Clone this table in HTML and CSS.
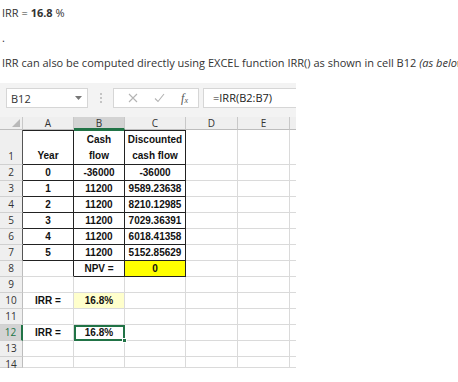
FILE: index.html
```html
<!DOCTYPE html>
<html>
<head>
<meta charset="utf-8">
<link rel="stylesheet" href="styles.css">
</head>
<body>
<p class="line">IRR = <b>16.8</b> %</p>
<p class="line">.</p>
<p class="line">IRR can also be computed directly using EXCEL function IRR() as shown in cell B12 <i>(as below)</i></p>

<div class="excel">
  <div class="fbar">
    <div class="namebox"><span>B12</span>
      <svg class="dd" width="7" height="4" viewBox="0 0 7 4"><path d="M0 0h7L3.5 4z" fill="#777"/></svg>
    </div>
    <div class="dots"><i></i><i></i><i></i></div>
    <div class="btns">
      <svg width="10" height="10" viewBox="0 0 10 10"><path d="M1 1l8 8M9 1l-8 8" stroke="#b4b4b4" stroke-width="1.1"/></svg>
      <svg width="11" height="10" viewBox="0 0 11 10"><path d="M1 5.5l3 3L10 1" stroke="#b4b4b4" stroke-width="1.1" fill="none"/></svg>
      <span class="fx">f<sub>x</sub></span>
    </div>
    <div class="formula">=IRR(B2:B7)</div>
  </div>

  <div class="grid">
    <div class="ch corner"><svg width="8" height="8" viewBox="0 0 8 8"><path d="M8 0V8H0z" fill="#b9b9b9"/></svg></div>
    <div class="ch">A</div><div class="ch sel">B</div><div class="ch">C</div><div class="ch">D</div><div class="ch">E</div><div class="ch last"></div>

    <div class="rh r1 kb">1</div>
    <div class="c r1 bt bb br bot">Year</div>
    <div class="c r1 bb br bot green-top">Cash<br>flow</div>
    <div class="c r1 bt bb br bot">Discounted<br>cash flow</div>
    <div class="c r1"></div><div class="c r1"></div><div class="c r1 last"></div>

    <div class="rh kb">2</div><div class="c bb br">0</div><div class="c bb br">-36000</div><div class="c bb br">-36000</div><div class="c"></div><div class="c"></div><div class="c last"></div>
    <div class="rh kb">3</div><div class="c bb br">1</div><div class="c bb br">11200</div><div class="c bb br">9589.23638</div><div class="c"></div><div class="c"></div><div class="c last"></div>
    <div class="rh kb">4</div><div class="c bb br">2</div><div class="c bb br">11200</div><div class="c bb br">8210.12985</div><div class="c"></div><div class="c"></div><div class="c last"></div>
    <div class="rh kb">5</div><div class="c bb br">3</div><div class="c bb br">11200</div><div class="c bb br">7029.36391</div><div class="c"></div><div class="c"></div><div class="c last"></div>
    <div class="rh kb">6</div><div class="c bb br">4</div><div class="c bb br">11200</div><div class="c bb br">6018.41358</div><div class="c"></div><div class="c"></div><div class="c last"></div>
    <div class="rh kb">7</div><div class="c bb br">5</div><div class="c bb br">11200</div><div class="c bb br">5152.85629</div><div class="c"></div><div class="c"></div><div class="c last"></div>
    <div class="rh">8</div><div class="c br"></div><div class="c bb br">NPV =</div><div class="c bb br yellow">0</div><div class="c"></div><div class="c"></div><div class="c last"></div>
    <div class="rh">9</div><div class="c"></div><div class="c"></div><div class="c"></div><div class="c"></div><div class="c"></div><div class="c last"></div>
    <div class="rh">10</div><div class="c">IRR =</div><div class="c lightyellow">16.8%</div><div class="c"></div><div class="c"></div><div class="c"></div><div class="c last"></div>
    <div class="rh">11</div><div class="c"></div><div class="c"></div><div class="c"></div><div class="c"></div><div class="c"></div><div class="c last"></div>
    <div class="rh selrow">12</div><div class="c">IRR =</div><div class="c active">16.8%<span class="handle"></span></div><div class="c"></div><div class="c"></div><div class="c"></div><div class="c last"></div>
    <div class="rh">13</div><div class="c"></div><div class="c"></div><div class="c"></div><div class="c"></div><div class="c"></div><div class="c last"></div>
    <div class="rh">14</div><div class="c"></div><div class="c"></div><div class="c"></div><div class="c"></div><div class="c"></div><div class="c last"></div>
  </div>
</div>
</body>
</html>
```
FILE: styles.css
```css
html, body {
  margin: 0;
  background: #fff;
}
body {
  padding-top: 5px;
  font-family: "Open Sans", "DejaVu Sans", sans-serif;
  color: #333;
  width: 458px;
  overflow: hidden;
}
.line {
  margin: 0 0 10px 2px;
  font-size: 11px;
  line-height: 15px;
  white-space: nowrap;
}
.line b { font-weight: 700; }
.line i { font-style: italic; }

.excel {
  margin-top: 13px;
  width: 296px;
  overflow: hidden;
  background: #fff;
}
.fbar {
  height: 34px;
  background: #f3f3f3;
  display: flex;
  align-items: flex-start;
  padding-top: 5px;
  box-sizing: border-box;
}
.namebox {
  margin-left: 6px;
  width: 82px;
  height: 20px;
  box-sizing: border-box;
  background: #fff;
  border: 1px solid #d6d6d6;
  display: flex;
  align-items: center;
  justify-content: space-between;
  padding: 0 5px 0 4px;
  font-size: 11px;
  color: #333;
}
.dots {
  width: 25px;
  height: 20px;
  display: flex;
  flex-direction: column;
  align-items: center;
  justify-content: center;
  gap: 2px;
}
.dots i {
  width: 2px;
  height: 2px;
  background: #c4c4c4;
}
.btns {
  width: 86px;
  height: 20px;
  box-sizing: border-box;
  background: #fff;
  border: 1px solid #d6d6d6;
  display: flex;
  align-items: center;
  justify-content: space-around;
  padding: 0 2px 0 6px;
}
.fx {
  font-family: "Liberation Serif", serif;
  font-style: italic;
  font-size: 12px;
  color: #555;
}
.fx sub { font-size: 8px; vertical-align: -1px; }
.formula {
  margin-left: 4px;
  flex: 1;
  height: 20px;
  box-sizing: border-box;
  background: #fff;
  border: 1px solid #d6d6d6;
  border-right: 0;
  font-size: 11px;
  line-height: 18px;
  padding-left: 9px;
  color: #222;
}

.grid {
  display: grid;
  grid-template-columns: 23px 51px 51px 61px 52px 52px 6px;
  grid-template-rows: 13px 35px repeat(12, 16px) 11px;
  font-family: "Liberation Sans", Arial, sans-serif;
  font-size: 10px;
  font-weight: 700;
  color: #111;
}
.grid > div {
  box-sizing: border-box;
  border-right: 1px solid #dadada;
  border-bottom: 1px solid #dadada;
  text-align: center;
  line-height: 15px;
  white-space: nowrap;
  position: relative;
}
.grid > .ch {
  background: #efefef;
  border-right-color: #c8c8c8;
  border-bottom-color: #bdbdbd;
  font-family: "Open Sans", sans-serif;
  font-weight: 400;
  color: #333;
  line-height: 12px;
  font-size: 10px;
}
.grid > .ch.sel {
  background: #d3d3d3;
  border-bottom: 2px solid #217346;
}
.corner {
  display: flex;
  align-items: flex-end;
  justify-content: flex-end;
  padding: 0 2px 2px 0;
}
.grid > .rh {
  background: #efefef;
  border-right-color: #bdbdbd;
  border-bottom-color: #d0d0d0;
  font-family: "Open Sans", sans-serif;
  font-weight: 400;
  color: #333;
  font-size: 10px;
}
.grid > .rh.kb { border-right-color: #555; }
.grid > .rh.selrow {
  background: #d3d3d3;
  color: #217346;
  border-right: 2px solid #217346;
}
.grid > .r1 { line-height: 16px; }
.grid > .rh.r1 {
  display: flex;
  align-items: flex-end;
  justify-content: center;
  line-height: 15px;
}
.grid > .bot {
  display: flex;
  align-items: flex-end;
  justify-content: center;
}
.grid > .bb { border-bottom-color: #222; }
.grid > .br { border-right-color: #222; }
.grid > .bt { box-shadow: inset 0 1px 0 #222; }
.grid > .green-top { box-shadow: inset 0 1px 0 #217346; }
.grid > .last { border-right: 0; }
.yellow { background: #ffff00; }
.lightyellow { background: #ffffcc; }
.grid > .active {
  outline: 2px solid #217346;
  outline-offset: -2px;
  z-index: 1;
}
.handle {
  position: absolute;
  right: -3px;
  bottom: -3px;
  width: 5px;
  height: 5px;
  background: #217346;
  border: 1px solid #fff;
  box-sizing: border-box;
}
```
